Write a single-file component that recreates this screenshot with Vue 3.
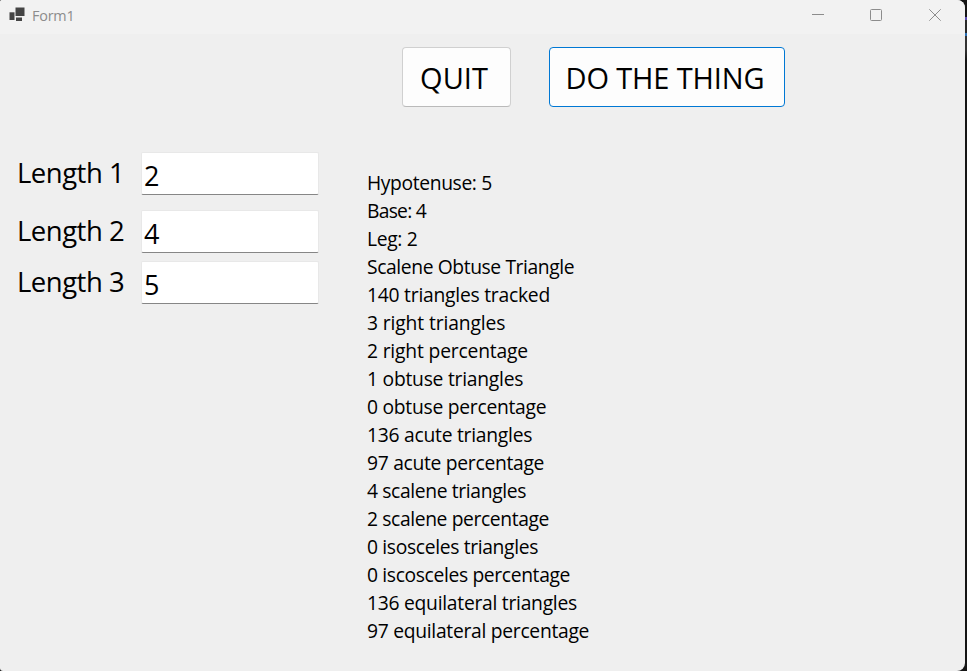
<script setup>
import { ref } from 'vue'

const fields = ref([
  { id: 1, label: 'Length 1', value: '2' },
  { id: 2, label: 'Length 2', value: '4' },
  { id: 3, label: 'Length 3', value: '5' },
])

// spacing: letter spacing of the line, in pixels
const results = [
  { text: 'Hypotenuse: 5', spacing: -0.38 },
  { text: 'Base: 4', spacing: -0.75 },
  { text: 'Leg: 2', spacing: -0.36 },
  { text: 'Scalene Obtuse Triangle', spacing: -0.4 },
  { text: '140 triangles tracked', spacing: -0.24 },
  { text: '3 right triangles', spacing: -0.13 },
  { text: '2 right percentage', spacing: -0.18 },
  { text: '1 obtuse triangles', spacing: -0.25 },
  { text: '0 obtuse percentage', spacing: -0.27 },
  { text: '136 acute triangles', spacing: -0.26 },
  { text: '97 acute percentage', spacing: -0.3 },
  { text: '4 scalene triangles', spacing: -0.37 },
  { text: '2 scalene percentage', spacing: -0.39 },
  { text: '0 isosceles triangles', spacing: -0.35 },
  { text: '0 iscosceles percentage', spacing: -0.36 },
  { text: '136 equilateral triangles', spacing: -0.27 },
  { text: '97 equilateral percentage', spacing: -0.29 },
]
</script>

<template>
  <div class="desktop">
    <div class="window">
      <header class="titlebar">
        <svg class="app-icon" width="16" height="16" viewBox="0 0 16 16">
          <rect x="6.5" y="0.5" width="9" height="8.5" fill="#444" />
          <rect x="0.5" y="5.3" width="5" height="7.7" fill="#444" />
          <rect x="7" y="10.5" width="6" height="3.5" fill="#444" />
        </svg>
        <span class="title">Form1</span>
        <svg class="controls" width="132" height="14" viewBox="0 0 132 14" fill="none" stroke="#8c8c8c">
          <path d="M0 6.5H12" />
          <rect x="58.5" y="1.5" width="11" height="11" rx="1" />
          <path d="M117.3 1.3L128.7 12.7M128.7 1.3L117.3 12.7" />
        </svg>
      </header>
      <div class="toolbar">
        <button class="btn quit">QUIT</button>
        <button class="btn primary">DO THE THING</button>
      </div>
      <main class="content">
        <form class="fields" @submit.prevent>
          <label v-for="f in fields" :key="f.id" class="field">
            <span class="label">{{ f.label }}</span>
            <input v-model="f.value" class="input" type="text" />
          </label>
        </form>
        <div class="results">
          <div
            v-for="line in results"
            :key="line.text"
            class="line"
            :style="{ letterSpacing: line.spacing + 'px' }"
          >{{ line.text }}</div>
        </div>
      </main>
    </div>
  </div>
</template>

<style>
body {
  overflow: hidden;
}
</style>

<style scoped>
.desktop {
  width: 967px;
  height: 671px;
  background: linear-gradient(#151515 17px, #5a4ab0 17px 20px, #2a2a2a 20px 33px, #2a6fb5 33px 36px, #333 36px 50px, #151515 60px);
  font-family: "Open Sans", "Noto Sans", sans-serif;
  color: #000;
}
.window {
  width: 965px;
  height: 671px;
  background: #efefef;
  border-radius: 2px 8px 8px 3px;
  overflow: hidden;
}
.titlebar {
  display: flex;
  align-items: center;
  height: 34px;
  padding-left: 9px;
  box-sizing: border-box;
  background: #f2f2f2;
}
.app-icon {
  margin-bottom: 4px;
}
.title {
  margin: 0 0 3px 7px;
  font-size: 14.4px;
  letter-spacing: -0.2px;
  color: #8c8c8c;
}
.controls {
  margin: 0 21px 4px auto;
}
.toolbar {
  display: flex;
  gap: 38px;
  padding: 13px 0 0 402px;
}
.btn {
  box-sizing: border-box;
  height: 60px;
  padding: 1px 0 0;
  font-family: inherit;
  font-size: 29px;
  color: #000;
  background: #fdfdfd;
  border: 1px solid #d0d0d0;
  border-bottom-color: #bababa;
  border-radius: 4px;
  white-space: nowrap;
}
.quit {
  width: 109px;
  padding-right: 5px;
}
.primary {
  width: 236px;
  padding-right: 4px;
  letter-spacing: -0.12px;
  border-color: #0078d4;
}
.content {
  display: flex;
  padding: 45px 0 0 17px;
}
.fields {
  display: flex;
  flex-direction: column;
  width: 350px;
}
.field {
  display: flex;
  height: 43px;
  margin-bottom: 15px;
}
.field:nth-child(2) {
  margin-bottom: 8px;
}
.label {
  width: 124px;
  font-size: 27.5px;
  letter-spacing: -0.5px;
  line-height: 42px;
}
.input {
  box-sizing: border-box;
  width: 178px;
  height: 43px;
  padding: 4px 2px 0 2px;
  font-family: inherit;
  font-size: 27px;
  color: #000;
  background: #fff;
  border: 1px solid #e8e8e8;
  border-bottom-color: #868686;
  border-radius: 2px;
  outline: none;
}
.results {
  padding-top: 17px;
}
.line {
  font-size: 19.3px;
  line-height: 28px;
  white-space: nowrap;
}
</style>
